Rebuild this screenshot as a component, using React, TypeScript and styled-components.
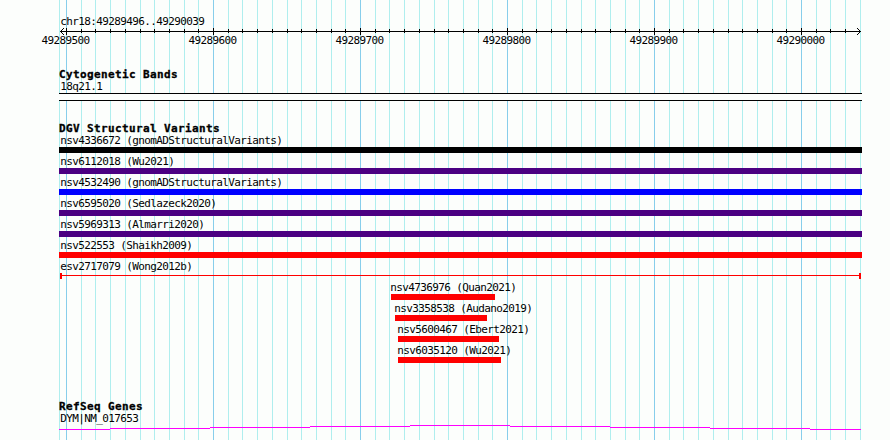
import styled, { createGlobalStyle } from "styled-components";

const LEFT = 59;
const FIRST_MAJOR = 66;
const STEP = 14.7;

const ticks = Array.from({ length: 55 }, (_, i) => ({
  x: Math.round(FIRST_MAJOR + i * STEP),
  major: i % 10 === 0,
}));

const scaleLabels = [
  "49289500",
  "49289600",
  "49289700",
  "49289800",
  "49289900",
  "49290000",
];

const variants = [
  { name: "nsv4336672 (gnomADStructuralVariants)", color: "#000000" },
  { name: "nsv6112018 (Wu2021)", color: "#4b0082" },
  { name: "nsv4532490 (gnomADStructuralVariants)", color: "#0000ff" },
  { name: "nsv6595020 (Sedlazeck2020)", color: "#4b0082" },
  { name: "nsv5969313 (Almarri2020)", color: "#4b0082" },
  { name: "nsv522553 (Shaikh2009)", color: "#ff0000" },
];

const shortVariants = [
  { name: "nsv4736976 (Quan2021)", start: 332, width: 104 },
  { name: "nsv3358538 (Audano2019)", start: 336, width: 92 },
  { name: "nsv5600467 (Ebert2021)", start: 339, width: 101 },
  { name: "nsv6035120 (Wu2021)", start: 339, width: 103 },
];

// [start, end, y] inside the gene lane
const intron = [
  [0, 51, 4],
  [51, 151, 3],
  [151, 251, 2],
  [251, 351, 1],
  [351, 451, 0],
  [451, 551, 1],
  [551, 651, 2],
  [651, 751, 3],
  [751, 802, 4],
];

const GridLines: React.FC = () => (
  <GridLayer width="890" height="440" shapeRendering="crispEdges">
    <rect x={LEFT} y="0" width="1" height="440" fill="#afeeee" />
    {ticks.map((tick) => (
      <rect
        key={tick.x}
        x={tick.x}
        y="0"
        width="1"
        height="440"
        fill={tick.major ? "#87ceeb" : "#afeeee"}
      />
    ))}
  </GridLayer>
);

const Ruler: React.FC = () => (
  <Drawing width="803" height="7" shapeRendering="crispEdges">
    <rect x="1" y="3" width="801" height="1" />
    {ticks.slice(0, -1).map((tick) => (
      <rect
        key={tick.x}
        x={tick.x - LEFT}
        y={tick.major ? 0 : 1}
        width="1"
        height={tick.major ? 7 : 4}
      />
    ))}
    {[1, 2, 3].map((d) => (
      <g key={d}>
        <rect x={1 + d} y={3 - d} width="1" height="1" />
        <rect x={1 + d} y={3 + d} width="1" height="1" />
        <rect x={801 - d} y={3 - d} width="1" height="1" />
        <rect x={801 - d} y={3 + d} width="1" height="1" />
      </g>
    ))}
  </Drawing>
);

const App: React.FC = () => {
  return (
    <>
      <GlobalStyle />
      <Page>
        <GridLines />
        <Tracks>
          <Label>chr18:49289496..49290039</Label>
          <Ruler />
          <Scale>
            {scaleLabels.map((label) => (
              <ScaleLabel key={label}>{label}</ScaleLabel>
            ))}
          </Scale>

          <Track $gap={22}>
            <Title>Cytogenetic Bands</Title>
            <Label>18q21.1</Label>
            <Band />
          </Track>

          <Track $gap={21}>
            <Title>DGV Structural Variants</Title>
            {variants.map((variant) => (
              <Row key={variant.name}>
                <Label>{variant.name}</Label>
                <Bar $color={variant.color} />
              </Row>
            ))}
            <Row>
              <Label>esv2717079 (Wong2012b)</Label>
              <Span />
            </Row>
            {shortVariants.map((variant) => (
              <Row key={variant.name} $start={variant.start}>
                <Label $indent={-0.7}>{variant.name}</Label>
                <Bar $color="#ff0000" $width={variant.width} />
              </Row>
            ))}
          </Track>

          <Track $gap={35}>
            <Title>RefSeq Genes</Title>
            <Label>DYM|NM_017653</Label>
            <Drawing width="803" height="5" shapeRendering="crispEdges">
              {intron.map(([start, end, y]) => (
                <rect
                  key={start}
                  x={start}
                  y={y}
                  width={end - start}
                  height="1"
                  fill="#ff00ff"
                />
              ))}
            </Drawing>
          </Track>
        </Tracks>
      </Page>
    </>
  );
};

export default App;

const GlobalStyle = createGlobalStyle`
  body {
    margin: 0;
    background-color: #fcfefc;
  }
`;

const Page = styled.div`
  position: relative;
  width: 890px;
  height: 440px;
  overflow: hidden;
  color: #000000;
  font-family: "DejaVu Sans Mono", monospace;
  font-size: 11px;
  line-height: 13px;
  letter-spacing: -0.622px;
  white-space: pre;
`;

const GridLayer = styled.svg`
  position: absolute;
  top: 0;
  left: 0;
`;

const Tracks = styled.main`
  position: relative;
  width: 803px;
  margin-left: 59px;
  padding-top: 15px;
`;

const Drawing = styled.svg`
  display: block;
`;

const Scale = styled.div`
  display: flex;
  gap: 99px;
  height: 12px;
  margin-top: -1px;
  margin-left: -17.5px;
`;

const ScaleLabel = styled.span`
  flex: 0 0 48px;
`;

const Track = styled.section<{ $gap: number }>`
  padding-top: ${({ $gap }) => $gap}px;
`;

const Title = styled.h2`
  height: 12px;
  margin: 0;
  font-size: 11px;
  font-weight: 700;
  letter-spacing: 0.378px;
  -webkit-text-stroke: 0.3px #000000;
`;

const Label = styled.div<{ $indent?: number }>`
  height: 13px;
  margin-left: ${({ $indent = 1.3 }) => $indent}px;
`;

const Band = styled.div`
  box-sizing: border-box;
  height: 8px;
  border-top: 1px solid #000000;
  border-bottom: 1px solid #000000;
  background-color: #fcfefc;
`;

const Row = styled.div<{ $start?: number }>`
  height: 21px;
  margin-left: ${({ $start = 0 }) => $start}px;
`;

const Bar = styled.div<{ $color: string; $width?: number }>`
  width: ${({ $width = 803 }) => $width}px;
  height: 6px;
  background-color: ${({ $color }) => $color};
`;

const Span = styled.div`
  box-sizing: border-box;
  width: 801px;
  height: 6px;
  margin-left: 1px;
  border-left: 2px solid #ff0000;
  border-right: 2px solid #ff0000;
  background: linear-gradient(#ff0000, #ff0000) 0 2px / 100% 1px no-repeat;
`;
